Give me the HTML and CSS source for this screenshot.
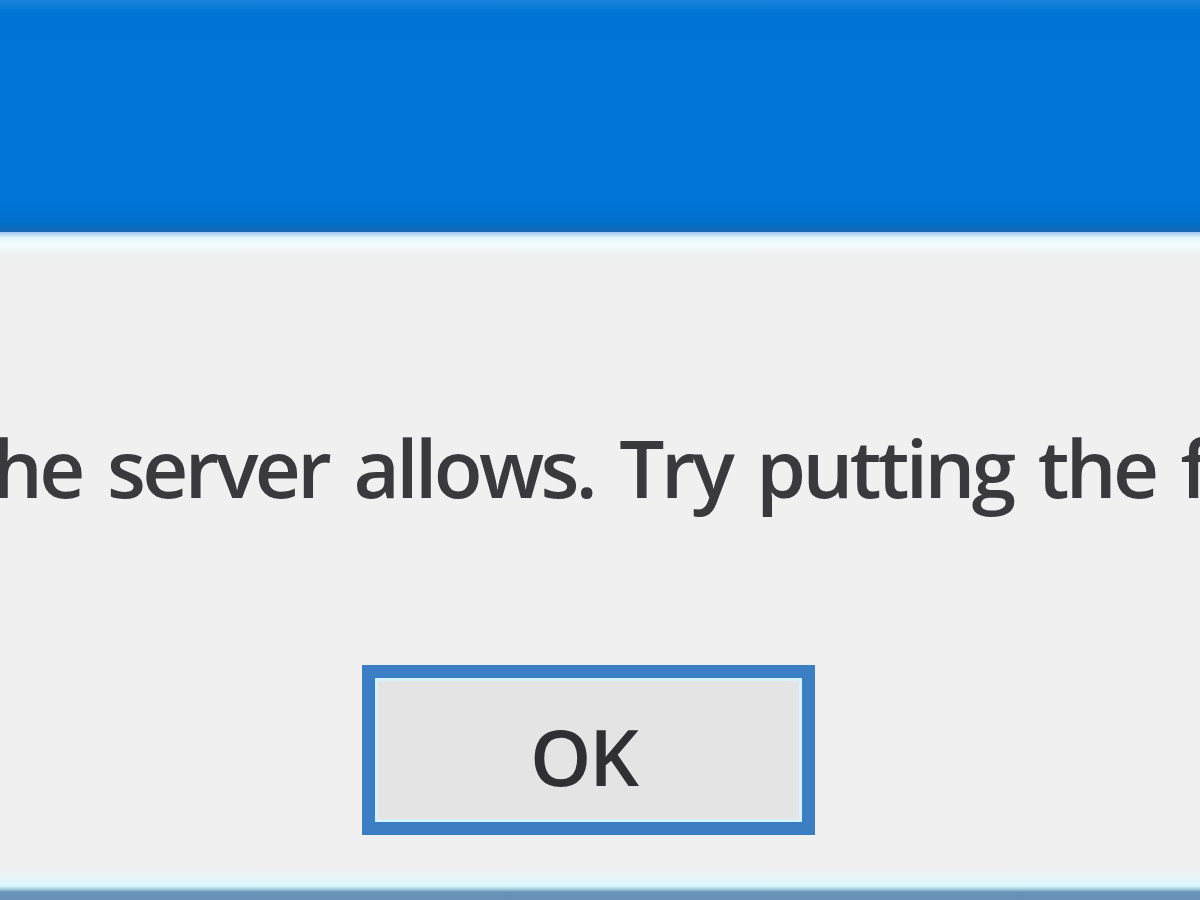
FILE: index.html
```html
<!DOCTYPE html>
<html lang="en">
<head>
<meta charset="utf-8">
<title>Dialog</title>
<link rel="stylesheet" href="styles.css">
</head>
<body>
<div class="window">
  <div class="titlebar"></div>
  <div class="content">
    <p class="message">the server allows. Try putting the file in a different location.</p>
    <div class="actions">
      <button class="btn" type="button">OK</button>
    </div>
  </div>
  <div class="frame-bottom"></div>
</div>
</body>
</html>
```
FILE: styles.css
```css
html, body {
  margin: 0;
  padding: 0;
  width: 1200px;
  height: 900px;
  overflow: hidden;
  background: #f0f0f0;
}

.window {
  display: flex;
  flex-direction: column;
  height: 900px;
  font-family: "Open Sans", "Noto Sans", sans-serif;
}

.titlebar {
  height: 232px;
  flex: none;
  background: linear-gradient(to bottom, #1782dc 0px, #0a7bd8 8px, #0074d6 14px, #0075d8 200px, #006fcc 222px, #1767b0 232px);
}

.content {
  flex: 1;
  display: flex;
  flex-direction: column;
  background: linear-gradient(to bottom, #9cc6ea 0px, #e2f6fb 6px, #f2fdff 12px, #eef0f0 22px, #f0f0f0 40px);
}

.message {
  margin: 185px 0 0 -36px;
  font-size: 80px;
  font-weight: 600;
  line-height: 100px;
  white-space: nowrap;
  color: #3a3a3e;
  letter-spacing: -3.6px;
  word-spacing: 8px;
}

.actions {
  margin-top: 148px;
  padding-left: 362px;
}

.btn {
  width: 453px;
  height: 170px;
  box-sizing: border-box;
  border: 13px solid #3b7ec3;
  box-shadow: inset 0 0 0 3px #d4f2ff;
  background: #e4e4e4;
  font-family: "Open Sans", "Noto Sans", sans-serif;
  font-size: 78px;
  font-weight: 600;
  color: #303034;
  padding: 12px 10px 0 0;
  letter-spacing: -2px;
}

.frame-bottom {
  height: 32px;
  flex: none;
  background: linear-gradient(to bottom, #f0f0f0 0px, #e8f4f6 10px, #d8f6fc 18px, #a9cfe0 21px, #6892b6 24px, #6690b5 32px);
}
```
